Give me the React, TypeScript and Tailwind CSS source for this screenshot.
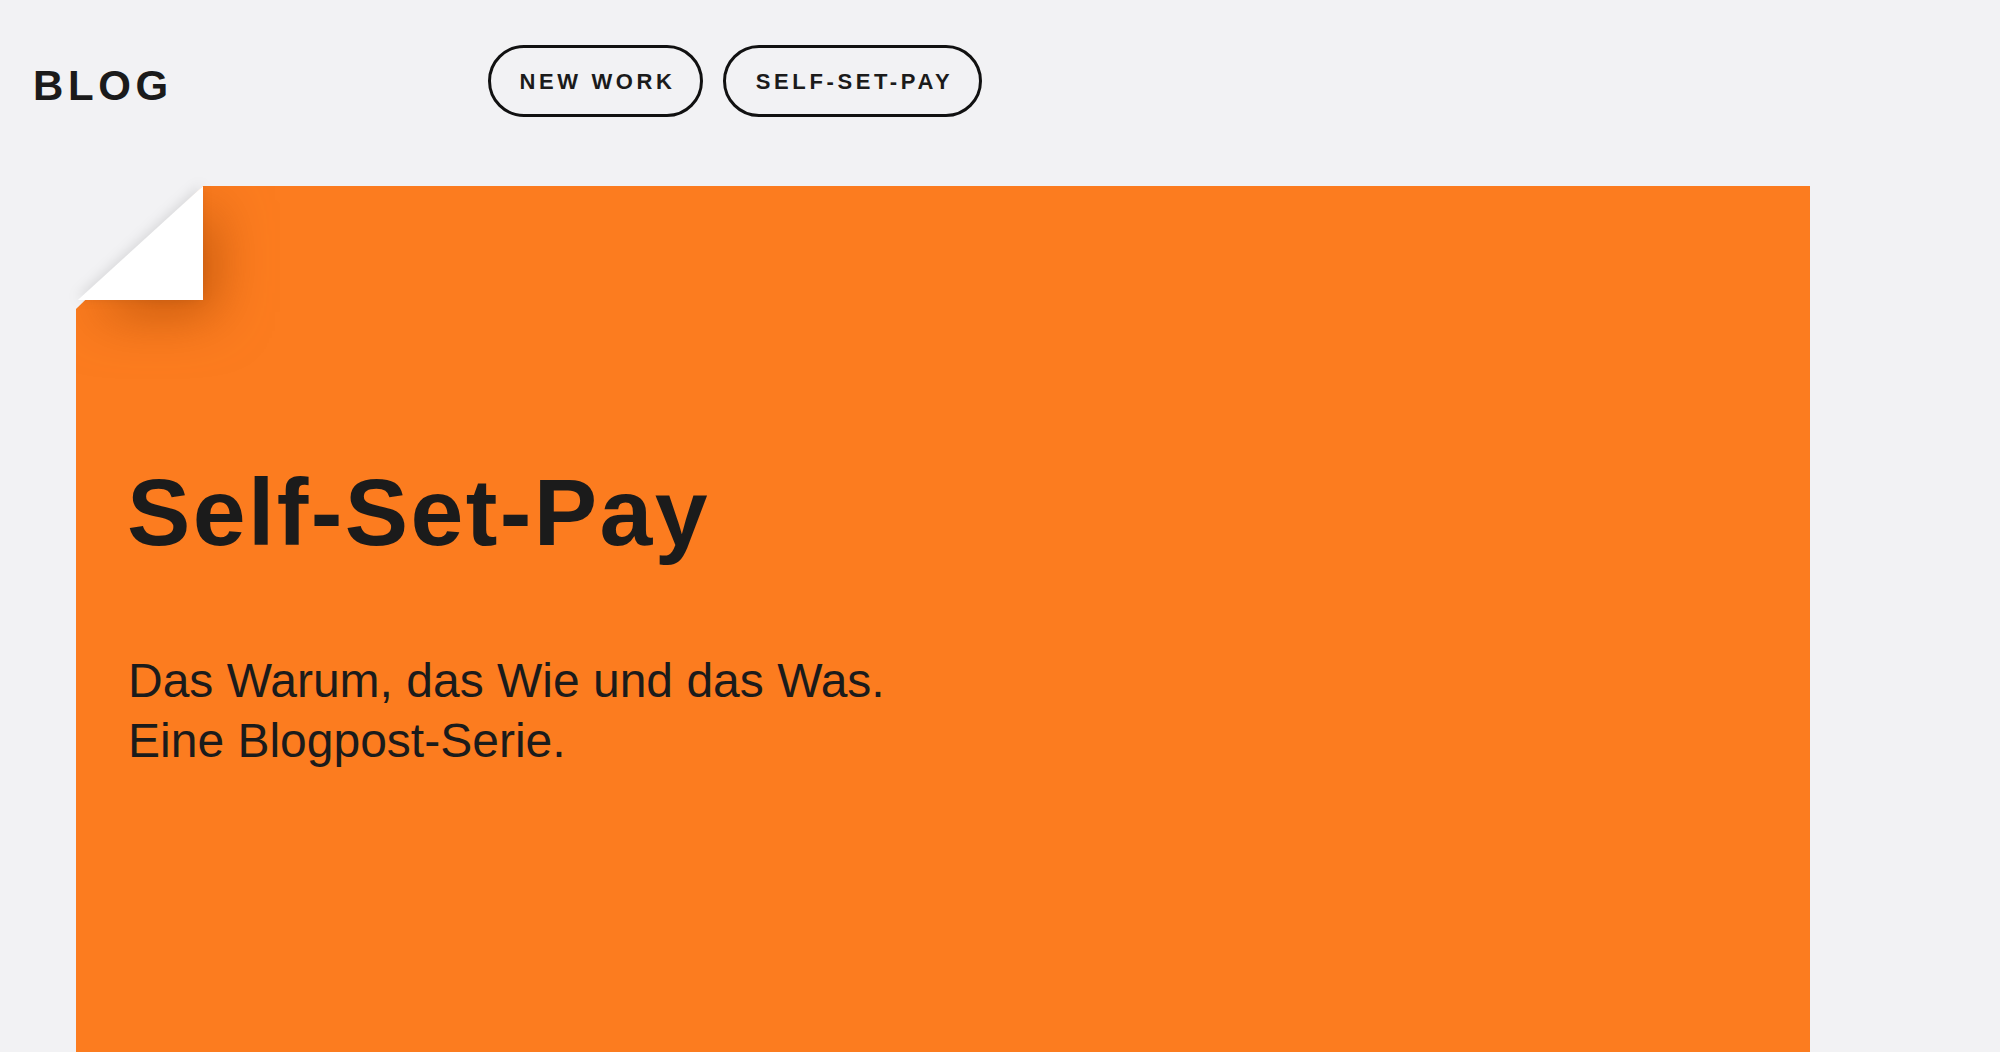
import React from 'react';

const tags = [
  { label: 'NEW WORK', w: 'w-[215px]' },
  { label: 'SELF-SET-PAY', w: 'w-[259px]' },
];

function Fold() {
  return <div className="w-[127px] h-[114px] bg-white [clip-path:polygon(100%_0,100%_100%,1.5%_100%)]" />;
}

export default function App() {
  return (
    <div className="h-[1052px] overflow-hidden bg-[#f2f2f4] font-['Liberation_Sans',Arial,sans-serif] text-[#1b1b1b]">
      {/* Header */}
      <header className="flex items-start pt-[45px] pl-[33px]">
        <div className="w-[455px] mt-[20px] text-[42px] leading-[42px] font-bold tracking-[0.11em]">
          BLOG
        </div>
        <nav className="flex gap-[20px]">
          {tags.map((t) => (
            <a
              key={t.label}
              href="#"
              className={`${t.w} h-[72px] flex items-center justify-center rounded-full border-[3px] border-[#111] text-[22px] font-bold tracking-[0.165em] pl-[4px]`}
            >
              {t.label}
            </a>
          ))}
        </nav>
      </header>

      {/* Teaser card */}
      <section className="relative mt-[69px] ml-[76px] w-[1734px] h-[866px]">
        <div className="relative h-full bg-[#fc7c1f] [clip-path:polygon(127px_0,100%_0,100%_100%,0_100%,0_123px)] pt-[279px] pl-[51px]">
          {/* fold shadow, kept inside the card */}
          <div className="absolute left-0 top-0 drop-shadow-[10px_12px_28px_rgba(150,60,0,0.6)]">
            <Fold />
          </div>
          <h1 className="text-[95px] leading-[95px] font-bold tracking-[0.025em]">Self-Set-Pay</h1>
          <p className="mt-[91px] pl-[1px] text-[48px] leading-[60px]">
            Das Warum, das Wie und das Was.
            <br />
            Eine Blogpost-Serie.
          </p>
        </div>

        {/* folded corner */}
        <div className="absolute left-0 top-0 drop-shadow-[-2px_-2px_6px_rgba(0,0,0,0.10)]">
          <Fold />
        </div>
      </section>
    </div>
  );
}
